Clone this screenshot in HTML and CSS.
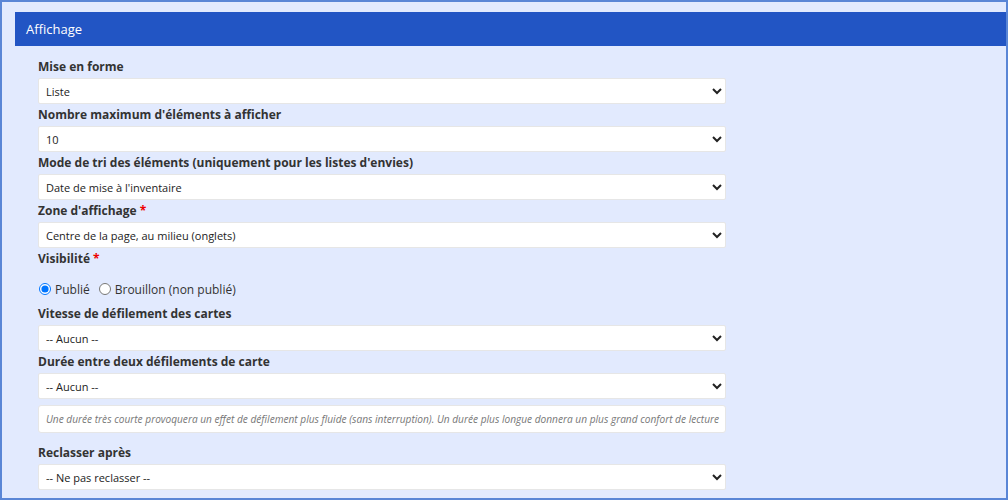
FILE: index.html
```html
<!DOCTYPE html>
<html lang="fr">

<head>
    <meta charset="UTF-8">
    <meta name="viewport" content="width=device-width, initial-scale=1.0">
    <title>Affichage</title>
    <link rel="stylesheet" href="styles.css">
</head>

<body>
    <div class="panel">
        <div class="panel-header">Affichage</div>
        <div class="panel-body">
            <div class="field">
                <label for="layout">Mise en forme</label>
                <select id="layout">
                    <option>Liste</option>
                    <option>Cartes</option>
                </select>
            </div>
            <div class="field">
                <label for="max-items">Nombre maximum d'éléments à afficher</label>
                <select id="max-items">
                    <option>10</option>
                    <option>20</option>
                    <option>50</option>
                </select>
            </div>
            <div class="field">
                <label for="sort">Mode de tri des éléments (uniquement pour les listes d'envies)</label>
                <select id="sort">
                    <option>Date de mise à l'inventaire</option>
                </select>
            </div>
            <div class="field">
                <label for="zone">Zone d'affichage <span class="required">*</span></label>
                <select id="zone">
                    <option>Centre de la page, au milieu (onglets)</option>
                </select>
            </div>
            <div class="field">
                <label>Visibilité <span class="required">*</span></label>
                <div class="radios">
                    <label class="radio"><input type="radio" name="visibility" checked> Publié</label>
                    <label class="radio"><input type="radio" name="visibility"> Brouillon (non publié)</label>
                </div>
            </div>
            <div class="field">
                <label for="speed">Vitesse de défilement des cartes</label>
                <select id="speed">
                    <option>-- Aucun --</option>
                </select>
            </div>
            <div class="field">
                <label for="delay">Durée entre deux défilements de carte</label>
                <select id="delay">
                    <option>-- Aucun --</option>
                </select>
                <div class="help">Une durée très courte provoquera un effet de défilement plus fluide (sans interruption). Un durée plus longue donnera un plus grand confort de lecture</div>
            </div>
            <div class="field">
                <label for="reorder">Reclasser après</label>
                <select id="reorder">
                    <option>-- Ne pas reclasser --</option>
                </select>
            </div>
        </div>
    </div>
</body>

</html>
```

FILE: styles.css
```css
html,
body {
    margin: 0;
    padding: 0;
    font-family: 'Open Sans', 'Liberation Sans', Arial, sans-serif;
}

.panel {
    box-sizing: border-box;
    width: 1008px;
    height: 500px;
    overflow: hidden;
    border: 2px solid #5a86d6;
    background-color: #e2eafe;
    padding: 10px 0 0 13px;
}

.panel-header {
    background-color: #2255c4;
    color: #fff;
    font-size: 13px;
    height: 34px;
    line-height: 34px;
    padding-left: 11px;
}

.panel-body {
    padding: 10px 0 0 23px;
}

.field > label {
    display: block;
    font-size: 12px;
    font-weight: bold;
    color: #333;
    line-height: 21px;
}

.required {
    color: #e00;
}

select {
    display: block;
    box-sizing: border-box;
    width: 688px;
    height: 26px;
    margin-top: 1px;
    font-family: inherit;
    font-size: 11px;
    color: #222;
    background-color: #fff;
    border: 1px solid #e6e6e6;
    border-radius: 2px;
    padding: 0 3px;
}

.radios {
    display: flex;
    align-items: center;
    gap: 8px;
    height: 22px;
    margin: 9px 0 3px;
}

.radio {
    display: flex;
    align-items: center;
    font-size: 12px;
    color: #333;
}

.radio input {
    margin: 0 4px 0 1px;
    width: 12px;
    height: 12px;
}

.help {
    box-sizing: border-box;
    width: 688px;
    height: 28px;
    line-height: 26px;
    margin: 6px 0 9px;
    padding-left: 7px;
    background-color: #fff;
    border: 1px solid #e6e6e6;
    border-radius: 3px;
    font-size: 10.15px;
    font-style: italic;
    color: #777;
    white-space: nowrap;
    overflow: hidden;
}
```
